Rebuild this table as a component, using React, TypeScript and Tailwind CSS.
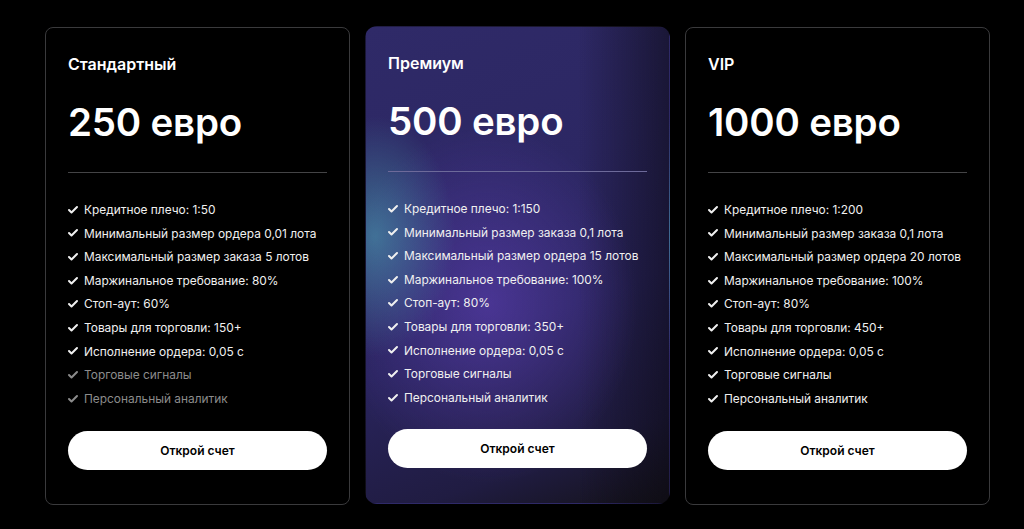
import { Check } from "lucide-react"

type Plan = {
  name: string
  price: string
  features: { text: string; muted?: boolean }[]
  premium?: boolean
}

const plans: Plan[] = [
  {
    name: "Стандартный",
    price: "250 евро",
    features: [
      { text: "Кредитное плечо: 1:50" },
      { text: "Минимальный размер ордера 0,01 лота" },
      { text: "Максимальный размер заказа 5 лотов" },
      { text: "Маржинальное требование: 80%" },
      { text: "Стоп-аут: 60%" },
      { text: "Товары для торговли: 150+" },
      { text: "Исполнение ордера: 0,05 с" },
      { text: "Торговые сигналы", muted: true },
      { text: "Персональный аналитик", muted: true },
    ],
  },
  {
    name: "Премиум",
    price: "500 евро",
    premium: true,
    features: [
      { text: "Кредитное плечо: 1:150" },
      { text: "Минимальный размер заказа 0,1 лота" },
      { text: "Максимальный размер ордера 15 лотов" },
      { text: "Маржинальное требование: 100%" },
      { text: "Стоп-аут: 80%" },
      { text: "Товары для торговли: 350+" },
      { text: "Исполнение ордера: 0,05 с" },
      { text: "Торговые сигналы" },
      { text: "Персональный аналитик" },
    ],
  },
  {
    name: "VIP",
    price: "1000 евро",
    features: [
      { text: "Кредитное плечо: 1:200" },
      { text: "Минимальный размер заказа 0,1 лота" },
      { text: "Максимальный размер ордера 20 лотов" },
      { text: "Маржинальное требование: 100%" },
      { text: "Стоп-аут: 80%" },
      { text: "Товары для торговли: 450+" },
      { text: "Исполнение ордера: 0,05 с" },
      { text: "Торговые сигналы" },
      { text: "Персональный аналитик" },
    ],
  },
]

function PlanCard({ plan }: { plan: Plan }) {
  const shell = plan.premium
    ? "border border-transparent rounded-[12px] bg-[radial-gradient(ellipse_80px_120px_at_3%_44%,rgba(75,160,180,0.6),transparent),radial-gradient(ellipse_150px_180px_at_40%_58%,rgba(105,70,200,0.5),transparent),linear-gradient(90deg,transparent_70%,rgba(10,8,16,0.55)_100%),linear-gradient(160deg,#2f2a68_0%,#2c2763_35%,#29245d_60%,#201c42_85%,#141219_100%)]"
    : "border border-[#3a3a3c] rounded-[8px] bg-black"

  return (
    <div className={`w-[305px] h-[478px] flex flex-col px-[22px] pt-6 ${shell}`}>
      <h3 className="text-[16px] leading-6 font-semibold text-white">{plan.name}</h3>
      <div className="mt-[23px] text-[38.5px] leading-[46px] font-semibold text-white tracking-[-0.2px]">
        {plan.price}
      </div>
      <div className={`mt-[27px] h-px ${plan.premium ? "bg-[#6d6a9a]" : "bg-[#444446]"}`} />
      <ul className="mt-[25px] flex flex-col">
        {plan.features.map((f) => (
          <li
            key={f.text}
            className={`flex items-center gap-[5px] whitespace-nowrap text-[11.9px] leading-[23.6px] ${
              f.muted ? "text-[#8c8c8c]" : "text-[#f0f0f0]"
            }`}
          >
            <Check className="w-[12px] h-[12px] shrink-0 -ml-px" strokeWidth={4} />
            <span>{f.text}</span>
          </li>
        ))}
      </ul>
      <button
        className={`${plan.premium ? "mt-[20px]" : "mt-[21px]"} h-[39px] w-full rounded-full bg-white text-black text-[12px] font-semibold`}
      >
        Открой счет
      </button>
    </div>
  )
}

export default function App() {
  return (
    <div
      className="w-[1024px] h-[529px] bg-black pl-[45px] pt-[26px] overflow-hidden"
      style={{ fontFamily: "Inter, 'Noto Sans', sans-serif" }}
    >
      <div className="flex gap-[15px] items-start">
        <div className="mt-px">
          <PlanCard plan={plans[0]} />
        </div>
        <PlanCard plan={plans[1]} />
        <div className="mt-px">
          <PlanCard plan={plans[2]} />
        </div>
      </div>
    </div>
  )
}
